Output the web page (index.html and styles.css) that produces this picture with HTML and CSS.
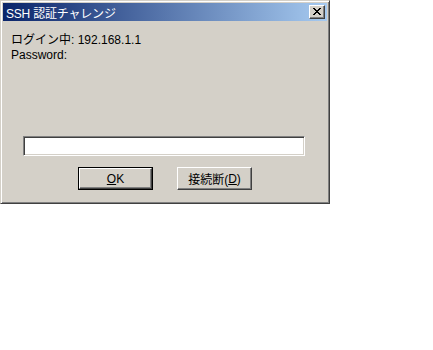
FILE: index.html
```html
<!DOCTYPE html>
<html lang="ja">
<head>
    <meta charset="UTF-8">
    <meta name="viewport" content="width=device-width, initial-scale=1.0">
    <link rel="stylesheet" href="styles.css">
</head>
<body>

    <!-- Окно диалога -->
    <div class="window">
        <div class="titlebar">
            <span class="title">SSH 認証チャレンジ</span>
            <div class="close-btn">
                <svg width="8" height="7" viewBox="0 0 8 7">
                    <path d="M0 0h2v1h-2zM6 0h2v1h-2zM1 1h2v1h-2zM5 1h2v1h-2zM2 2h4v1h-4zM3 3h2v1h-2zM2 4h4v1h-4zM1 5h2v1h-2zM5 5h2v1h-2zM0 6h2v1h-2zM6 6h2v1h-2z" fill="#000"/>
                </svg>
            </div>
        </div>
        <div class="content">
            <div class="message">
                <div>ログイン中: 192.168.1.1</div>
                <div>Password:</div>
            </div>
            <input type="password" class="field">
            <div class="buttons">
                <div class="frame-default"><div class="button"><u>O</u>K</div></div>
                <div class="button">接続断(<u>D</u>)</div>
            </div>
        </div>
    </div>

</body>
</html>
```

FILE: styles.css
```css
body {
    margin: 0;
    padding: 0;
    background-color: #fff;
    font-family: "Liberation Sans", "Noto Sans CJK JP", sans-serif;
    font-size: 12px;
    color: #000;
}
.window {
    width: 330px;
    height: 204px;
    box-sizing: border-box;
    background: #d4d0c8;
    border: 1px solid;
    border-color: #d4d0c8 #404040 #404040 #d4d0c8;
    box-shadow: inset 1px 1px 0 #fff, inset -1px -1px 0 #808080;
    padding: 2px;
    display: flex;
    flex-direction: column;
}
/* Заголовок */
.titlebar {
    height: 18px;
    display: flex;
    align-items: center;
    justify-content: space-between;
    padding: 0 2px 0 3px;
    background: linear-gradient(to right, #0a246a, #a6caf0);
}
.title {
    color: #fff;
    font-size: 12px;
    letter-spacing: -0.2px;
}
.close-btn {
    width: 16px;
    height: 14px;
    box-sizing: border-box;
    background: #d4d0c8;
    border: 1px solid;
    border-color: #fff #404040 #404040 #fff;
    box-shadow: inset -1px -1px 0 #808080;
    display: flex;
    align-items: center;
    justify-content: center;
    padding: 0 1px 1px 0;
}
.close-btn svg {
    display: block;
}
/* Содержимое */
.content {
    display: flex;
    flex-direction: column;
}
.message {
    margin: 12px 0 0 8px;
    line-height: 15px;
}
.field {
    margin: 73px 0 0 20px;
    width: 282px;
    height: 20px;
    box-sizing: border-box;
    padding: 0;
    background: #fff;
    border: 1px solid;
    border-color: #808080 #fff #fff #808080;
    box-shadow: inset 1px 1px 0 #404040, inset -1px -1px 0 #d4d0c8;
    outline: none;
}
.buttons {
    display: flex;
    gap: 24px;
    margin: 11px 0 0 75px;
}
.frame-default {
    border: 1px solid #000;
}
.button {
    width: 75px;
    height: 23px;
    box-sizing: border-box;
    background: #d4d0c8;
    border: 1px solid;
    border-color: #fff #404040 #404040 #fff;
    box-shadow: inset -1px -1px 0 #808080;
    display: flex;
    align-items: center;
    justify-content: center;
    font-size: 12px;
}
.frame-default .button {
    width: 73px;
    height: 21px;
}
u {
    text-decoration: underline;
    text-underline-offset: 1px;
}
```
